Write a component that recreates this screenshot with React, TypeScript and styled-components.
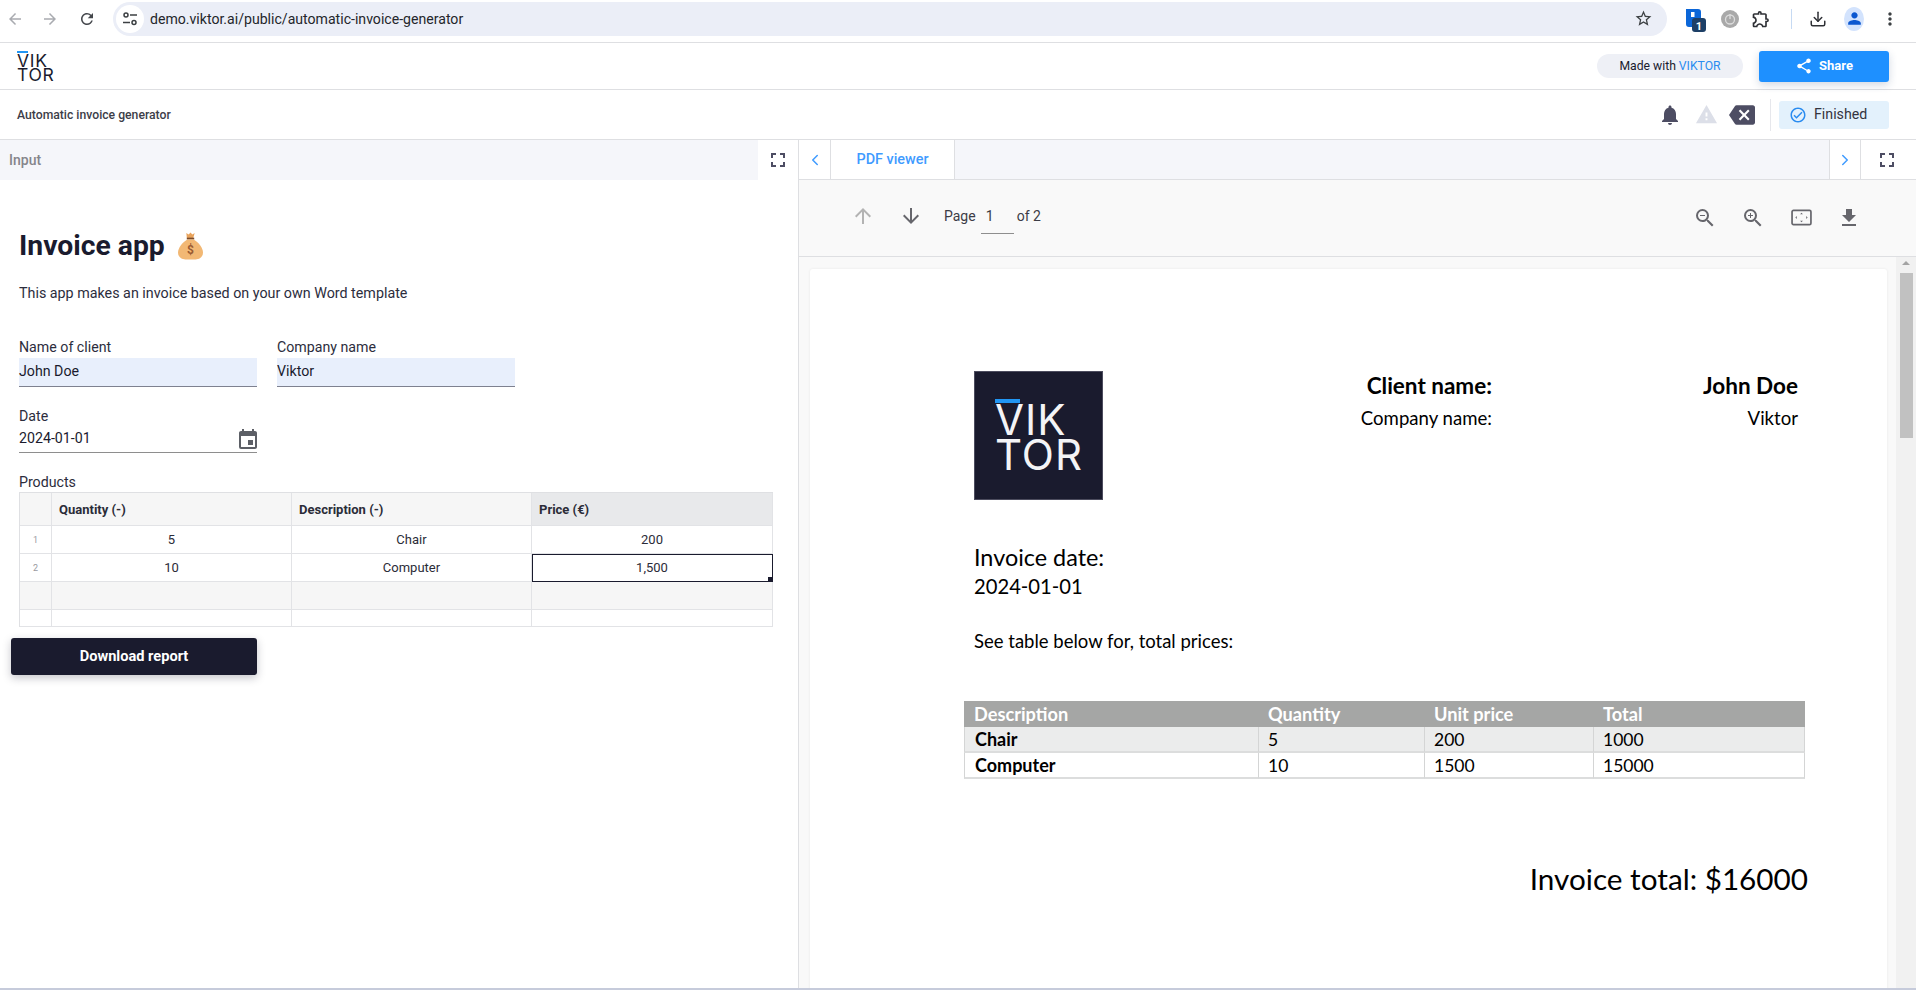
import React from "react";
import styled, { createGlobalStyle } from "styled-components";
import {
  MdArrowBack,
  MdArrowDownward,
  MdArrowForward,
  MdArrowUpward,
  MdBackspace,
  MdEvent,
  MdFileDownload,
  MdFullscreen,
  MdMoreVert,
  MdNotifications,
  MdOutlineCheckCircle,
  MdOutlineExtension,
  MdPerson,
  MdRefresh,
  MdShare,
  MdStarBorder,
  MdWarning,
  MdZoomIn,
  MdZoomOut,
} from "react-icons/md";
import { LuChevronLeft, LuChevronRight, LuDownload } from "react-icons/lu";

const GlobalStyle = createGlobalStyle`
  html, body {
    margin: 0;
    padding: 0;
    background: #fff;
    overflow: hidden;
  }
  * {
    box-sizing: border-box;
  }
  body {
    font-family: Roboto, "Liberation Sans", sans-serif;
    color: #1a1b2e;
  }
`;

const Page = styled.div`
  height: 990px;
  display: flex;
  flex-direction: column;
  overflow: hidden;
  border-bottom: 2px solid #c6cbdb;
`;

/* browser chrome */
const BrowserBar = styled.div`
  flex: 0 0 43px;
  display: flex;
  align-items: center;
  padding: 0 0 5px 0;
  border-bottom: 1px solid #dedfe2;
`;

const NavIcon = styled.span<{ $muted?: boolean; $w?: number }>`
  width: ${({ $w }) => $w ?? 36}px;
  display: flex;
  justify-content: center;
  font-size: 18px;
  color: ${({ $muted }) => ($muted ? "#a9abb0" : "#44474c")};
`;

const AddressBar = styled.div`
  width: 1554px;
  height: 34px;
  margin: 0 7px 0 9px;
  border-radius: 17px;
  background: #ebeef7;
  display: flex;
  align-items: center;
  padding: 0 14px 0 3px;
  color: #24262b;
  font-size: 14.1px;
`;

const TuneBadge = styled.span`
  width: 28px;
  height: 28px;
  margin-right: 6px;
  border-radius: 50%;
  background: #fff;
  display: flex;
  align-items: center;
  justify-content: center;
`;

const Url = styled.span`
  flex: 1;
`;

const ToolbarDivider = styled.span`
  width: 1px;
  height: 20px;
  margin: 0 8px 0 14px;
  background: #c6daf3;
`;

const ProfileBadge = styled.span`
  width: 20px;
  height: 24px;
  margin: 0 8px;
  border-radius: 50%;
  background: #d3e3fd;
  color: #0b57d0;
  display: flex;
  align-items: center;
  justify-content: center;
  font-size: 19px;
`;

/* app header */
const AppHeader = styled.header`
  flex: 0 0 47px;
  display: flex;
  align-items: center;
  padding: 0 27px 0 17px;
  border-bottom: 1px solid #dedfe2;
`;

const LogoText = styled.div<{ $big?: boolean }>`
  font-family: Inter, sans-serif;
  font-weight: 400;
  font-size: ${({ $big }) => ($big ? 42 : 17.5)}px;
  line-height: ${({ $big }) => ($big ? 35 : 14)}px;
  letter-spacing: ${({ $big }) => ($big ? 1 : 0.7)}px;
  color: ${({ $big }) => ($big ? "#f4f4f6" : "#1a1b2e")};

  &::before {
    content: "";
    display: block;
    width: ${({ $big }) => ($big ? 25 : 11)}px;
    height: ${({ $big }) => ($big ? 4 : 2)}px;
    background: #2196f3;
    margin-bottom: ${({ $big }) => ($big ? -1 : 1)}px;
  }
`;

const HeaderSpacer = styled.div`
  flex: 1;
`;

const MadeWith = styled.div`
  width: 146px;
  height: 24px;
  border-radius: 12px;
  background: #eef0f6;
  display: flex;
  align-items: center;
  justify-content: center;
  gap: 3px;
  font-size: 12.2px;
  margin-right: 16px;
`;

const BlueWord = styled.span`
  color: #2a8cf0;
`;

const ShareButton = styled.button`
  width: 130px;
  height: 31px;
  border: 0;
  border-radius: 3px;
  background: #1e90ff;
  color: #fff;
  font: 700 13px Roboto, sans-serif;
  display: flex;
  align-items: center;
  justify-content: center;
  gap: 6px;
  box-shadow: 0 3px 8px rgba(30, 60, 110, 0.2);
  padding: 0 0 2px 0;
  svg {
    font-size: 18px;
    transform: translateY(1px);
  }
`;

/* sub header */
const SubHeader = styled.div`
  flex: 0 0 50px;
  display: flex;
  align-items: center;
  padding: 0 27px 0 17px;
  border-bottom: 1px solid #dedfe2;
  font-size: 12.2px;
  font-weight: 500;
  color: #3c3d48;
`;

const StatusIcon = styled.span<{ $c: string; $s: number; $w: number }>`
  width: ${({ $w }) => $w}px;
  display: flex;
  justify-content: center;
  color: ${({ $c }) => $c};
  font-size: ${({ $s }) => $s}px;
`;

const StatusDivider = styled.span`
  width: 1px;
  height: 32px;
  background: #e6e7ec;
  margin: 0 8px 0 10px;
`;

const FinishedChip = styled.div`
  width: 110px;
  height: 28px;
  border-radius: 3px;
  background: #e3f1fc;
  display: flex;
  align-items: center;
  padding: 0 0 1px 10px;
  gap: 7px;
  font-size: 14.2px;
  font-weight: 400;
  color: #33343f;
  svg {
    color: #2a8cf0;
    font-size: 18px;
    transform: translateY(1px);
  }
`;

/* panels */
const Panels = styled.main`
  flex: 1;
  min-height: 0;
  display: flex;
`;

const LeftPanel = styled.section`
  flex: 0 0 799px;
  border-right: 1px solid #dedfe2;
  display: flex;
  flex-direction: column;
`;

const RightPanel = styled.section`
  flex: 1;
  min-width: 0;
  display: flex;
  flex-direction: column;
`;

const TabRow = styled.div<{ $line?: boolean }>`
  flex: 0 0 40px;
  display: flex;
  align-items: stretch;
  background: #f5f6fa;
  border-bottom: ${({ $line }) => ($line ? "1px solid #dedfe2" : "0")};
`;

const InputTab = styled.div`
  flex: 1;
  padding-left: 9px;
  display: flex;
  align-items: center;
  font-size: 14px;
  font-weight: 500;
  color: #85858b;
`;

const SquareButton = styled.div<{ $w?: number; $pad?: number }>`
  flex: 0 0 ${({ $w }) => $w ?? 40}px;
  padding-right: ${({ $pad }) => $pad ?? 0}px;
  background: #fff;
  display: flex;
  align-items: center;
  justify-content: center;
  font-size: 24px;
  color: #4d4d63;
`;

const ChevronTab = styled.div<{ $side: "left" | "right" }>`
  flex: 0 0 32px;
  background: #fff;
  display: flex;
  align-items: center;
  justify-content: center;
  color: #3f9bff;
  font-size: 18px;
  border-right: 1px solid #dedfe2;
  border-left: ${({ $side }) => ($side === "right" ? "1px solid #dedfe2" : "0")};
`;

const PdfTab = styled.div`
  flex: 0 0 124px;
  background: #fff;
  border-right: 1px solid #dedfe2;
  display: flex;
  align-items: center;
  justify-content: center;
  color: #3f9bff;
  font-size: 14.4px;
  font-weight: 500;
`;

const TabFill = styled.div`
  flex: 1;
`;

/* form */
const FormBody = styled.div`
  padding: 46px 24px 0 19px;
  display: flex;
  flex-direction: column;
`;

const Title = styled.h1`
  margin: 0;
  font-size: 28.3px;
  line-height: 40px;
  font-weight: 700;
  display: flex;
  align-items: center;
  gap: 13px;
`;

const Intro = styled.p`
  margin: 17px 0 0;
  font-size: 14.3px;
  line-height: 20px;
  color: #2c2d3d;
`;

const FieldRow = styled.div`
  display: flex;
  gap: 20px;
  margin-top: 36px;
`;

const Field = styled.div`
  width: 238px;
`;

const Label = styled.div`
  font-size: 14.2px;
  line-height: 18px;
  padding-bottom: 2px;
  margin-top: -1px;
  color: #2c2d3d;
`;

const TextInput = styled.div`
  height: 29px;
  background: #e8effc;
  border-bottom: 1px solid #7e8190;
  font-size: 14.2px;
  line-height: 26px;
`;

const DateRow = styled.div`
  width: 238px;
  margin-top: 21px;
`;

const DateInput = styled.div`
  height: 26px;
  border-bottom: 1px solid #8e8e8e;
  font-size: 14.2px;
  line-height: 22px;
  display: flex;
  justify-content: space-between;
  svg {
    font-size: 24px;
    color: #5c5f66;
    margin-right: -3px;
    transform: translateY(1px);
  }
`;

const ProductsLabel = styled.div`
  font-size: 14.2px;
  line-height: 20px;
  margin-top: 19px;
  color: #2c2d3d;
`;

const Sheet = styled.div`
  display: grid;
  grid-template-columns: 32px 240px 240px 241px;
  grid-template-rows: 33px 28px 28px 28px 17px;
  width: 754px;
  border-top: 1px solid #dfe0e3;
  border-left: 1px solid #dfe0e3;
`;

const SheetCell = styled.div<{
  $kind?: "head" | "index" | "body" | "active" | "selectedHead" | "blank";
}>`
  border-right: 1px solid #e2e3e6;
  border-bottom: 1px solid #e2e3e6;
  display: flex;
  align-items: center;
  position: relative;
  justify-content: ${({ $kind }) =>
    $kind === "head" || $kind === "selectedHead" ? "flex-start" : "center"};
  padding: ${({ $kind }) =>
    $kind === "head" || $kind === "selectedHead" ? "0 0 0 7px" : "0"};
  font-size: ${({ $kind }) => ($kind === "index" ? 9 : 13)}px;
  font-weight: ${({ $kind }) =>
    $kind === "head" || $kind === "selectedHead" ? 700 : 400};
  color: ${({ $kind }) => ($kind === "index" ? "#9a9a9f" : "#2b2c38")};
  background: ${({ $kind }) =>
    $kind === "selectedHead"
      ? "#e8e9eb"
      : $kind === "head" || $kind === "blank"
        ? "#f6f6f6"
        : "#fff"};
  outline: ${({ $kind }) => ($kind === "active" ? "1.5px solid #1a1b2e" : "0")};
  outline-offset: -1px;
`;

const FillHandle = styled.span`
  position: absolute;
  right: 0;
  bottom: 0;
  width: 4px;
  height: 4px;
  background: #1a1b2e;
`;

const DownloadButton = styled.button`
  align-self: flex-start;
  width: 246px;
  height: 37px;
  margin: 11px 0 0 -8px;
  padding: 0 0 2px;
  border: 0;
  border-radius: 3px;
  background: #1a1b2e;
  color: #fff;
  font: 700 14.6px Roboto, sans-serif;
  box-shadow: 0 3px 8px rgba(26, 27, 46, 0.25);
`;

/* pdf viewer */
const PdfToolbar = styled.div`
  flex: 0 0 77px;
  background: #f9f9f9;
  border-bottom: 1px solid #dedfe2;
  display: flex;
  align-items: center;
  padding: 0 53px 5px 50px;
  font-size: 14px;
  color: #3c3c46;
`;

const ToolIcon = styled.span<{ $off?: boolean; $gap?: number; $low?: boolean }>`
  width: 28px;
  display: flex;
  justify-content: center;
  margin-right: ${({ $gap }) => $gap ?? 20}px;
  font-size: 24px;
  color: ${({ $off }) => ($off ? "#b3b3b3" : "#66666c")};
  transform: translateY(${({ $low }) => ($low ? 2 : 0)}px);
`;

const PageInput = styled.span`
  width: 33px;
  height: 30px;
  margin: 0 3px 0 5px;
  padding: 2px 0 0 5px;
  border-bottom: 1px solid #8e8e8e;
  transform: translateY(3px);
  line-height: 20px;
`;

const PageWord = styled.span`
  line-height: 20px;
`;

const Viewer = styled.div`
  flex: 1;
  min-height: 0;
  display: flex;
  background: #f9f9f9;
`;

const ViewerScroll = styled.div`
  flex: 1;
  min-width: 0;
  padding: 12px 9px 0 11px;
  overflow: hidden;
`;

const Paper = styled.div`
  height: 900px;
  background: #fff;
  box-shadow: 0 0 3px rgba(0, 0, 0, 0.07);
  border-radius: 3px;
  padding: 102px 0 0 164px;
  font-family: Lato, Carlito, sans-serif;
  color: #000;
`;

const PaperTop = styled.div`
  display: grid;
  grid-template-columns: 129px 389px 306px;
`;

const LogoBox = styled.div`
  width: 129px;
  height: 129px;
  background: #1a1b2e;
  border: 1px solid #4c4c5e;
  padding: 27px 0 0 20px;
  overflow: hidden;
`;

const ClientCol = styled.div`
  text-align: right;
  margin-top: -1px;
`;

const BoldLine = styled.div`
  font-weight: 700;
  font-size: 22.5px;
  line-height: 32px;
`;

const PlainLine = styled.div`
  font-size: 18.6px;
  line-height: 32px;
`;

const DateBlock = styled.div`
  margin-top: 43px;
`;

const DateTitle = styled.div`
  font-size: 23.4px;
  line-height: 29px;
`;

const DateValue = styled.div`
  font-size: 20.2px;
  line-height: 29px;
`;

const TableIntro = styled.div`
  margin-top: 26px;
  font-size: 18.5px;
  line-height: 28px;
`;

const InvoiceTable = styled.div`
  display: grid;
  grid-template-columns: 295px 166px 169px 211px;
  grid-template-rows: 26px 26px 26px;
  width: 841px;
  margin: 46px 0 0 -10px;
`;

const InvoiceCell = styled.div<{ $head?: boolean; $bold?: boolean; $shade?: boolean; $first?: boolean }>`
  display: flex;
  align-items: center;
  padding-left: ${({ $first }) => ($first ? 10 : 9)}px;
  font-size: ${({ $head, $bold }) => ($head ? 18.2 : $bold ? 18 : 17.5)}px;
  font-weight: ${({ $head, $bold }) => ($head || $bold ? 700 : 400)};
  color: ${({ $head }) => ($head ? "#fff" : "#000")};
  background: ${({ $head, $shade }) => ($head ? "#a5a6a5" : $shade ? "#ebecec" : "#fff")};
  border-bottom: ${({ $head }) => ($head ? "0" : "2px solid #dcdddd")};
  border-right: ${({ $head }) => ($head ? "0" : "1px solid #d4d5d5")};
  border-left: ${({ $head, $first }) => (!$head && $first ? "1px solid #d4d5d5" : "0")};
`;

const InvoiceTotal = styled.div`
  width: 844px;
  margin: 80px 0 0 -10px;
  text-align: right;
  font-size: 29.7px;
  line-height: 40px;
`;

const ScrollTrack = styled.div`
  flex: 0 0 20px;
  background: #f1f1f1;
  display: flex;
  flex-direction: column;
  align-items: center;
  padding-top: 4px;
`;

const ScrollArrow = styled.span`
  width: 0;
  height: 0;
  border-left: 4px solid transparent;
  border-right: 4px solid transparent;
  border-bottom: 4px solid #a3a3a3;
`;

const ScrollThumb = styled.div`
  width: 13px;
  height: 165px;
  margin-top: 8px;
  background: #c1c1c1;
`;

const MoneyBag = () => (
  <svg width="25" height="28" viewBox="0 0 27 30">
    <path d="M9 1l2.5 1.5L13.5.5l2 2L18 1l-1.6 5.5h-6.8z" fill="#e8a35c" />
    <rect x="9.5" y="6" width="8" height="2" fill="#7a4a2a" />
    <path
      d="M10 8h7c5 3 10 9 10 14 0 5-4 7.500-8 7.500H8c-4 0-8-2.500-8-7.500C0 17 5 11 10 8z"
      fill="#f2b874"
    />
    <text x="13.500" y="24" fontSize="13" textAnchor="middle" fill="#9a5b32" fontFamily="Roboto">
      $
    </text>
  </svg>
);

const TuneIcon = () => (
  <svg width="16" height="16" viewBox="0 0 16 16" fill="none" stroke="#3c4043" strokeWidth="1.500">
    <circle cx="4" cy="4" r="2" />
    <path d="M8 4h7M1 11.500h7" />
    <circle cx="12" cy="11.500" r="2" />
  </svg>
);

const ExtensionBadge = () => (
  <svg width="24" height="26" viewBox="0 0 24 26">
    <path d="M4 3h12a3 3 0 0 1 3 3v8H12v7H7a3 3 0 0 1-3-3z" fill="#0b66d8" />
    <rect x="9" y="6" width="3.500" height="5" fill="#fff" />
    <rect x="10" y="12" width="14" height="14" rx="3" fill="#1d3f66" />
    <text x="17" y="23.500" fontSize="11" fontWeight="700" textAnchor="middle" fill="#fff" fontFamily="Roboto">
      1
    </text>
  </svg>
);

const PowerIcon = () => (
  <svg width="18" height="18" viewBox="0 0 18 18">
    <circle cx="9" cy="9" r="9" fill="#a9a9a9" />
    <circle cx="9" cy="9.500" r="4.500" fill="none" stroke="#dcdcdc" strokeWidth="1.300" />
    <path d="M9 4v5" stroke="#dcdcdc" strokeWidth="1.300" />
  </svg>
);

const FitIcon = () => (
  <svg width="21" height="17" viewBox="0 0 22 18">
    <rect x="1" y="1.500" width="20" height="15" rx="1.500" fill="none" stroke="#66666c" strokeWidth="1.800" />
    <path d="M11 4l1.500 1.500h-3zM11 14l1.500-1.500h-3zM4.500 9L6 7.500v3zM17.500 9L16 7.500v3z" fill="#66666c" />
  </svg>
);

const products = [
  { index: "1", quantity: "5", description: "Chair", price: "200" },
  { index: "2", quantity: "10", description: "Computer", price: "1,500" },
];

const invoiceRows = [
  { name: "Chair", quantity: "5", price: "200", total: "1000", shade: true },
  { name: "Computer", quantity: "10", price: "1500", total: "15000", shade: false },
];

export default function App() {
  return (
    <>
      <GlobalStyle />
      <Page>
        <BrowserBar>
          <NavIcon $muted $w={30}><MdArrowBack /></NavIcon>
          <NavIcon $muted $w={40}><MdArrowForward /></NavIcon>
          <NavIcon $w={34}><MdRefresh /></NavIcon>
          <AddressBar>
            <TuneBadge><TuneIcon /></TuneBadge>
            <Url>demo.viktor.ai/public/automatic-invoice-generator</Url>
            <MdStarBorder size={19} color="#3c4043" />
          </AddressBar>
          <NavIcon $w={40}><ExtensionBadge /></NavIcon>
          <NavIcon $w={31}><PowerIcon /></NavIcon>
          <NavIcon $w={32}><MdOutlineExtension size={20} color="#2f3136" /></NavIcon>
          <ToolbarDivider />
          <NavIcon $w={36}><LuDownload size={18} color="#2f3136" /></NavIcon>
          <ProfileBadge><MdPerson /></ProfileBadge>
          <NavIcon $w={36}><MdMoreVert size={20} color="#3c4043" /></NavIcon>
        </BrowserBar>

        <AppHeader>
          <LogoText>VIK<br />TOR</LogoText>
          <HeaderSpacer />
          <MadeWith>Made with <BlueWord>VIKTOR</BlueWord></MadeWith>
          <ShareButton><MdShare />Share</ShareButton>
        </AppHeader>

        <SubHeader>
          Automatic invoice generator
          <HeaderSpacer />
          <StatusIcon $c="#4d4d63" $s={24} $w={36}><MdNotifications /></StatusIcon>
          <StatusIcon $c="#dcdfe8" $s={23} $w={36}><MdWarning /></StatusIcon>
          <StatusIcon $c="#4d4d63" $s={26} $w={36}><MdBackspace /></StatusIcon>
          <StatusDivider />
          <FinishedChip><MdOutlineCheckCircle />Finished</FinishedChip>
        </SubHeader>

        <Panels>
          <LeftPanel>
            <TabRow>
              <InputTab>Input</InputTab>
              <SquareButton><MdFullscreen /></SquareButton>
            </TabRow>
            <FormBody>
              <Title>Invoice app <MoneyBag /></Title>
              <Intro>This app makes an invoice based on your own Word template</Intro>
              <FieldRow>
                <Field>
                  <Label>Name of client</Label>
                  <TextInput>John Doe</TextInput>
                </Field>
                <Field>
                  <Label>Company name</Label>
                  <TextInput>Viktor</TextInput>
                </Field>
              </FieldRow>
              <DateRow>
                <Label>Date</Label>
                <DateInput>2024-01-01<MdEvent /></DateInput>
              </DateRow>
              <ProductsLabel>Products</ProductsLabel>
              <Sheet>
                <SheetCell $kind="head" />
                <SheetCell $kind="head">Quantity (-)</SheetCell>
                <SheetCell $kind="head">Description (-)</SheetCell>
                <SheetCell $kind="selectedHead">Price (€)</SheetCell>
                {products.map((row) => (
                  <React.Fragment key={row.index}>
                    <SheetCell $kind="index">{row.index}</SheetCell>
                    <SheetCell>{row.quantity}</SheetCell>
                    <SheetCell>{row.description}</SheetCell>
                    <SheetCell $kind={row.index === "2" ? "active" : "body"}>
                      {row.price}
                      {row.index === "2" && <FillHandle />}
                    </SheetCell>
                  </React.Fragment>
                ))}
                <SheetCell $kind="blank" />
                <SheetCell $kind="blank" />
                <SheetCell $kind="blank" />
                <SheetCell $kind="blank" />
                <SheetCell />
                <SheetCell />
                <SheetCell />
                <SheetCell />
              </Sheet>
              <DownloadButton>Download report</DownloadButton>
            </FormBody>
          </LeftPanel>

          <RightPanel>
            <TabRow $line>
              <ChevronTab $side="left"><LuChevronLeft strokeWidth={2} /></ChevronTab>
              <PdfTab>PDF viewer</PdfTab>
              <TabFill />
              <ChevronTab $side="right"><LuChevronRight strokeWidth={2} /></ChevronTab>
              <SquareButton $w={55} $pad={3}><MdFullscreen /></SquareButton>
            </TabRow>
            <PdfToolbar>
              <ToolIcon $off><MdArrowUpward /></ToolIcon>
              <ToolIcon $gap={19}><MdArrowDownward /></ToolIcon>
              <PageWord>Page</PageWord>
              <PageInput>1</PageInput>
              <PageWord>of 2</PageWord>
              <HeaderSpacer />
              <ToolIcon $low><MdZoomOut /></ToolIcon>
              <ToolIcon $low><MdZoomIn /></ToolIcon>
              <ToolIcon $low><FitIcon /></ToolIcon>
              <ToolIcon $low $gap={0}><MdFileDownload /></ToolIcon>
            </PdfToolbar>
            <Viewer>
              <ViewerScroll>
                <Paper>
                  <PaperTop>
                    <LogoBox><LogoText $big>VIK<br />TOR</LogoText></LogoBox>
                    <ClientCol>
                      <BoldLine>Client name:</BoldLine>
                      <PlainLine>Company name:</PlainLine>
                    </ClientCol>
                    <ClientCol>
                      <BoldLine>John Doe</BoldLine>
                      <PlainLine>Viktor</PlainLine>
                    </ClientCol>
                  </PaperTop>
                  <DateBlock>
                    <DateTitle>Invoice date:</DateTitle>
                    <DateValue>2024-01-01</DateValue>
                  </DateBlock>
                  <TableIntro>See table below for, total prices:</TableIntro>
                  <InvoiceTable>
                    <InvoiceCell $head $first>Description</InvoiceCell>
                    <InvoiceCell $head>Quantity</InvoiceCell>
                    <InvoiceCell $head>Unit price</InvoiceCell>
                    <InvoiceCell $head>Total</InvoiceCell>
                    {invoiceRows.map((row) => (
                      <React.Fragment key={row.name}>
                        <InvoiceCell $first $bold $shade={row.shade}>{row.name}</InvoiceCell>
                        <InvoiceCell $shade={row.shade}>{row.quantity}</InvoiceCell>
                        <InvoiceCell $shade={row.shade}>{row.price}</InvoiceCell>
                        <InvoiceCell $shade={row.shade}>{row.total}</InvoiceCell>
                      </React.Fragment>
                    ))}
                  </InvoiceTable>
                  <InvoiceTotal>Invoice total: $16000</InvoiceTotal>
                </Paper>
              </ViewerScroll>
              <ScrollTrack>
                <ScrollArrow />
                <ScrollThumb />
              </ScrollTrack>
            </Viewer>
          </RightPanel>
        </Panels>
      </Page>
    </>
  );
}
